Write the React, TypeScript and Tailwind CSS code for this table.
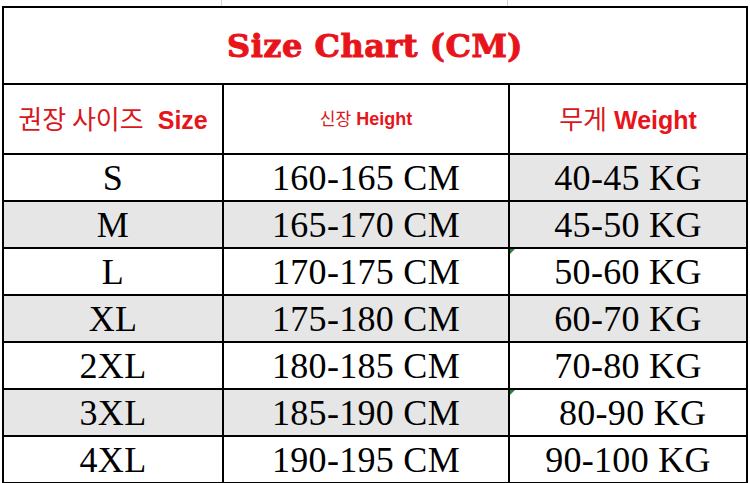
const ROWS: { size: string; height: string; weight: string; shade: [boolean, boolean, boolean]; mark?: boolean }[] = [
  { size: 'S', height: '160-165 CM', weight: '40-45 KG', shade: [false, false, true] },
  { size: 'M', height: '165-170 CM', weight: '45-50 KG', shade: [true, true, true] },
  { size: 'L', height: '170-175 CM', weight: '50-60 KG', shade: [false, false, false], mark: true },
  { size: 'XL', height: '175-180 CM', weight: '60-70 KG', shade: [true, true, true] },
  { size: '2XL', height: '180-185 CM', weight: '70-80 KG', shade: [false, false, false] },
  { size: '3XL', height: '185-190 CM', weight: '\u00a080-90 KG', shade: [true, true, false], mark: true },
  { size: '4XL', height: '190-195 CM', weight: '90-100 KG', shade: [false, false, false] },
];

const serif = 'font-["Liberation_Serif",serif]';

export default function App() {
  return (
    <div className="w-[750px] h-[483px] bg-white pl-[2px] overflow-hidden">
      {/* faint sheet gridlines above the table */}
      <div className="flex h-[6px] w-[744px]">
        <div className="w-[220px] border-r border-[#d4d4d4]" />
        <div className="w-[286px] border-r border-[#d4d4d4]" />
        <div className="flex-1" />
      </div>
      <table className="table-fixed border-collapse w-[744px]">
        <colgroup>
          <col className="w-[220px]" />
          <col className="w-[286px]" />
          <col className="w-[238px]" />
        </colgroup>
        <tbody>
          <tr className="h-[77px]">
            <td colSpan={3} className="border-2 border-black text-center p-0">
              <span className='font-["DejaVu_Serif",serif] font-bold text-[32px] text-[#e8141b] tracking-[0.5px] [-webkit-text-stroke:1px_#e8141b]'>
                Size Chart (CM)
              </span>
            </td>
          </tr>
          <tr className="h-[70px]">
            <td className="border-2 border-black text-center p-0 whitespace-nowrap">
              <span className='font-["Noto_Sans_CJK_KR",sans-serif] text-[26px] text-[#d7181e]'>권장 사이즈</span>
              <span className='font-["Liberation_Sans",sans-serif] font-bold text-[25px] text-[#e8141b] ml-[14px]'>Size</span>
            </td>
            <td className="border-2 border-black text-center p-0 whitespace-nowrap">
              <span className='font-["Noto_Sans_CJK_KR",sans-serif] text-[17px] text-[#d7181e]'>신장</span>
              <span className='font-["Liberation_Sans",sans-serif] font-bold text-[18px] text-[#e8141b] ml-[5px]'>Height</span>
            </td>
            <td className="border-2 border-black text-center p-0 whitespace-nowrap">
              <span className='font-["Noto_Sans_CJK_KR",sans-serif] text-[26px] text-[#d7181e]'>무게</span>
              <span className='font-["Liberation_Sans",sans-serif] font-bold text-[25px] text-[#e8141b] ml-[7px]'>Weight</span>
            </td>
          </tr>
          {ROWS.map((r) => (
            <tr key={r.size} className="h-[47px]">
              {[r.size, r.height, r.weight].map((v, i) => (
                <td
                  key={i}
                  className={`relative border-2 border-black text-center p-0 leading-none whitespace-pre ${serif} text-[36px] tracking-[0.3px] text-black ${
                    r.shade[i] ? 'bg-[#e6e6e6]' : 'bg-white'
                  }`}
                >
                  {i === 2 && r.mark && (
                    <span className="absolute left-0 top-0 w-0 h-0 border-t-[5px] border-t-[#1e8a3a] border-r-[5px] border-r-transparent" />
                  )}
                  {v}
                </td>
              ))}
            </tr>
          ))}
        </tbody>
      </table>
    </div>
  );
}
